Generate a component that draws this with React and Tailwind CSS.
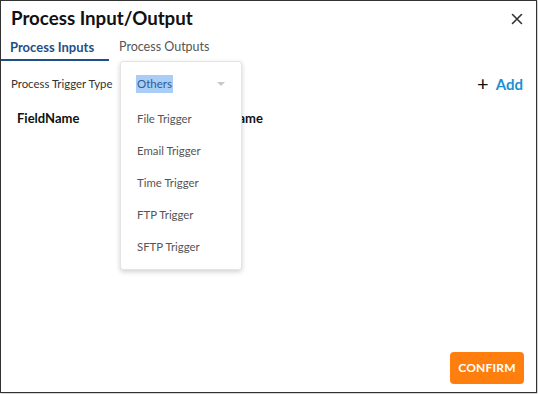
import React from "react";

const triggers = ["File Trigger", "Email Trigger", "Time Trigger", "FTP Trigger", "SFTP Trigger"];

const App = () => {
  return (
    <div className="w-[538px] h-[394px] bg-white" style={{ fontFamily: "Lato, 'Open Sans', sans-serif" }}>
      <div className="relative w-[537px] h-[393px] border-[1.5px] border-[#333] flex flex-col shadow-[1px_1px_2px_rgba(0,0,0,0.25)]">
        {/* Header */}
        <div className="flex items-center justify-between pl-[10px] pr-[13px] h-[33px] pt-[1px]">
          <h1 className="text-[18.7px] font-bold text-[#111]">Process Input/Output</h1>
          <svg width="12" height="12" viewBox="0 0 12 12" className="mt-[1px]">
            <path d="M1.5 1.5 L10.5 10.5 M10.5 1.5 L1.5 10.5" stroke="#333" strokeWidth="1.6" strokeLinecap="round" />
          </svg>
        </div>

        {/* Tabs */}
        <div className="flex items-end h-[27px]">
          <div className="w-[108px] h-full flex items-center pl-[9px] pt-[2px] border-b-2 border-[#1f4f8a]">
            <span className="text-[13px] font-bold text-[#1f4f8a]">Process Inputs</span>
          </div>
          <div className="h-full flex items-center pl-[10px]">
            <span className="text-[12.5px] text-[#555]">Process Outputs</span>
          </div>
        </div>

        {/* Trigger type row */}
        <div className="flex items-center justify-between pl-[10px] pr-[13px] mt-[13px] h-[20px]">
          <span className="text-[11.4px] text-[#333]">Process Trigger Type</span>
          <div className="flex items-center gap-[7px]">
            <span className="text-[20px] leading-none text-[#111] -mt-[2px]">+</span>
            <span className="text-[15px] font-bold text-[#1e8fd0]">Add</span>
          </div>
        </div>

        {/* Table header (second column sits under the open dropdown) */}
        <div className="flex items-center pl-[16px] mt-[15px] h-[20px] text-[13px] font-bold text-[#111]">
          <span className="w-[169px]">FieldName</span>
          <span>DisplayName</span>
        </div>

        <div className="flex-1" />

        {/* Footer */}
        <div className="flex justify-end pr-[12px] pb-[8px]">
          <button className="w-[74px] h-[32px] rounded-[4px] bg-[#ff7f0e] text-white text-[12px] font-bold tracking-[0.2px]">
            CONFIRM
          </button>
        </div>

        {/* Dropdown menu overlay */}
        <div className="absolute left-[119px] top-[60px] w-[122px] h-[209px] bg-white rounded-[3px] border border-[#e4e4e4] shadow-[0_2px_5px_rgba(0,0,0,0.18)] flex flex-col">
          <div className="flex items-center justify-between pl-[15px] pr-[16px] h-[41px] pt-[3px]">
            <span className="text-[11.5px] text-[#2c5c9a] bg-[#a9cdf5] px-[1px]">Others</span>
            <svg width="8" height="4" viewBox="0 0 8 4">
              <path d="M0 0 L8 0 L4 4 Z" fill="#c8c8c8" />
            </svg>
          </div>
          <div className="flex flex-col">
            {triggers.map((t) => (
              <div key={t} className="h-[32px] flex items-center pl-[16px] text-[11.4px] text-[#555]">
                {t}
              </div>
            ))}
          </div>
        </div>
      </div>
    </div>
  );
};

export default App;
